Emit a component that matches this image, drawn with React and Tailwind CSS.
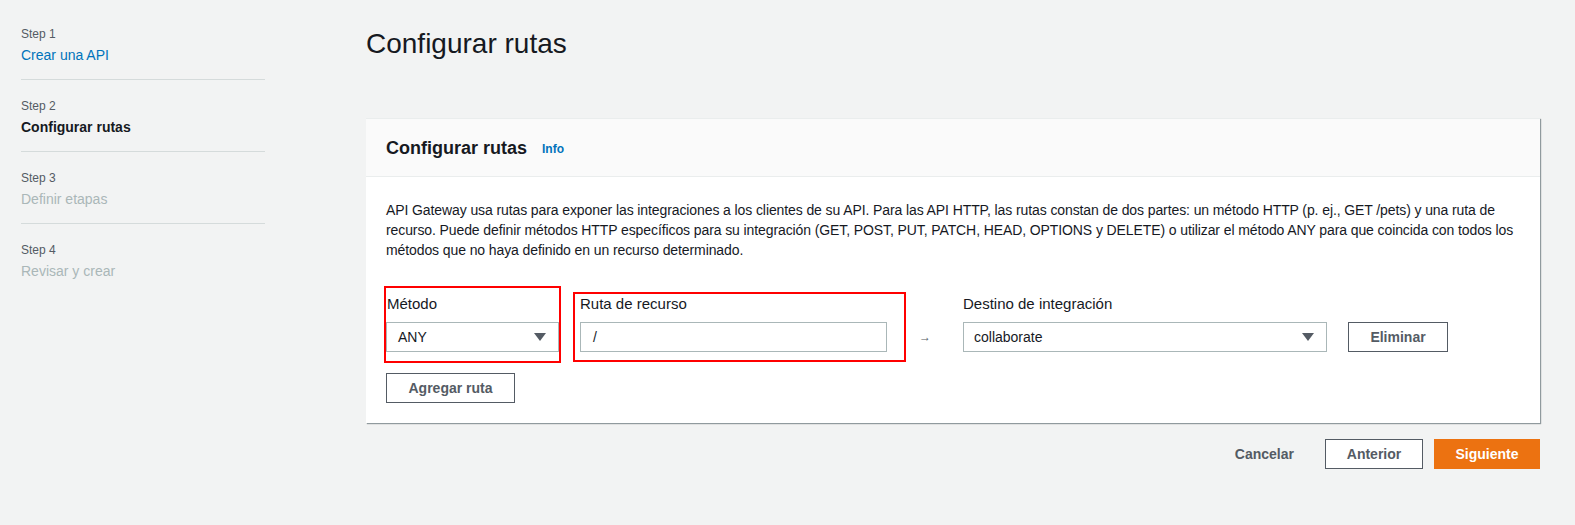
const Caret = () => (
  <svg width="12" height="8" viewBox="0 0 12 8" className="shrink-0">
    <path d="M0 0 L12 0 L6 8 Z" fill="#545b64" />
  </svg>
);

const steps = [
  { n: 1, label: 'Crear una API', cls: 'text-[#0073bb]' },
  { n: 2, label: 'Configurar rutas', cls: 'text-[#16191f] font-bold' },
  { n: 3, label: 'Definir etapas', cls: 'text-[#aab7b8]' },
  { n: 4, label: 'Revisar y crear', cls: 'text-[#aab7b8]' },
];

export default function App() {
  return (
    <div
      className="min-h-[525px] w-full bg-[#f2f3f3] flex text-[#16191f]"
      style={{ fontFamily: '"Liberation Sans", Arial, sans-serif' }}
    >
      <aside className="w-[366px] shrink-0 pl-[21px] pt-[26px]">
        <div className="w-[244px]">
          {steps.map((s, i) => (
            <div
              key={s.n}
              className={`pb-[14px] ${i === 0 ? 'pt-0' : 'pt-[18px]'} ${i < steps.length - 1 ? 'border-b border-[#d5dbdb]' : ''}`}
            >
              <div className="text-[12px] leading-[16px] text-[#545b64]">Step {s.n}</div>
              <div className={`text-[14px] leading-[20px] mt-[3px] ${s.cls}`}>{s.label}</div>
            </div>
          ))}
        </div>
      </aside>

      <main className="flex-1 pr-[35px]">
        <h1 className="text-[28px] leading-[36px] font-normal mt-[26px]">Configurar rutas</h1>

        <section className="mt-[56px] bg-white shadow-[1px_1px_1px_0_rgba(0,28,36,0.3),1px_1px_1px_0_rgba(0,28,36,0.15)] border-t border-[#eaeded]">
          <div className="h-[58px] bg-[#fafafa] border-b border-[#eaeded] flex items-center px-[20px]">
            <h2 className="text-[18px] font-bold leading-[22px]">Configurar rutas</h2>
            <span className="ml-[15px] text-[12px] font-bold text-[#0073bb] mt-[3px]">Info</span>
          </div>

          <div className="px-[20px] pt-[23px] pb-[20px]">
            <p className="text-[14px] leading-[20px] tracking-[-0.1px]">
              API Gateway usa rutas para exponer las integraciones a los clientes de su API. Para las API HTTP, las rutas constan de dos partes: un método HTTP (p. ej., GET /pets) y una ruta de recurso. Puede definir métodos HTTP específicos para su integración (GET, POST, PUT, PATCH, HEAD, OPTIONS y DELETE) o utilizar el método ANY para que coincida con todos los métodos que no haya definido en un recurso determinado.
            </p>

            <div className="relative mt-[34px] flex items-end">
              <div className="w-[173px]">
                <div className="text-[15px] leading-[20px] mb-[8px] ml-[1px]">Método</div>
                <div className="h-[30px] border border-[#aab7b8] flex items-center justify-between pl-[11px] pr-[12px] text-[14px]">
                  <span>ANY</span>
                  <Caret />
                </div>
              </div>

              <div className="w-[307px] ml-[21px]">
                <div className="text-[15px] leading-[20px] mb-[8px]">Ruta de recurso</div>
                <div className="h-[30px] border border-[#aab7b8] flex items-center pl-[12px] text-[14px]">/</div>
              </div>

              <div className="w-[76px] h-[30px] flex items-center pl-[32px] text-[12px] text-[#545b64]">→</div>

              <div className="w-[364px]">
                <div className="text-[15px] leading-[20px] mb-[8px]">Destino de integración</div>
                <div className="h-[30px] border border-[#aab7b8] flex items-center justify-between pl-[10px] pr-[12px] text-[14px]">
                  <span>collaborate</span>
                  <Caret />
                </div>
              </div>

              <button className="ml-[21px] w-[100px] h-[30px] border border-[#545b64] bg-white text-[14px] font-bold text-[#545b64]">
                Eliminar
              </button>

              <div className="absolute left-[-2px] top-[-8px] w-[177px] h-[77px] border-2 border-[#ff0000] pointer-events-none" />
              <div className="absolute left-[187px] top-[-2px] w-[333px] h-[70px] border-2 border-[#ff0000] pointer-events-none" />
            </div>

            <button className="mt-[21px] w-[129px] h-[30px] border border-[#545b64] bg-white text-[14px] font-bold text-[#545b64]">
              Agregar ruta
            </button>
          </div>
        </section>

        <div className="mt-[16px] flex justify-end items-center">
          <button className="text-[14px] font-bold text-[#545b64] mr-[31px]">Cancelar</button>
          <button className="w-[98px] h-[30px] border border-[#545b64] bg-white text-[14px] font-bold text-[#545b64] mr-[11px]">
            Anterior
          </button>
          <button className="w-[106px] h-[30px] bg-[#ec7211] text-[14px] font-bold text-white">Siguiente</button>
        </div>
      </main>
    </div>
  );
}
